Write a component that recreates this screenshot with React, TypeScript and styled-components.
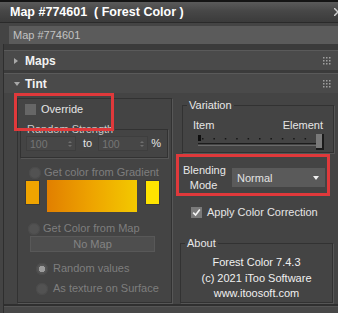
import React from 'react';
import styled, { createGlobalStyle } from 'styled-components';

const GlobalStyle = createGlobalStyle`
  html, body {
    margin: 0;
    padding: 0;
    background: #444444;
  }
  body {
    font-family: "Liberation Sans", Arial, sans-serif;
    font-size: 11px;
  }
`;

const Window = styled.div`
  width: 338px;
  height: 313px;
  overflow: hidden;
  background: #444444;
  display: flex;
  flex-direction: column;
  color: #e8e8e8;
`;

const TitleBar = styled.div`
  height: 20px;
  border-top: 2px solid #141414;
  border-bottom: 1px solid #2a2a2a;
  background: linear-gradient(#5a5a5a, #474747 45%, #3b3b3b);
  display: flex;
  align-items: center;
  padding-left: 10px;
  font-size: 12.5px;
  font-weight: bold;
  color: #ffffff;
  white-space: pre;
`;

const NameField = styled.div`
  margin: 3px 0 0 9px;
  height: 18px;
  line-height: 18px;
  padding-left: 4px;
  background: #5b5b5b;
  color: #c2c2c2;
`;

const RolloutArea = styled.div`
  flex: 1;
  display: flex;
  flex-direction: column;
  gap: 3px;
  padding-top: 6px;
  margin-left: 3px;
  background: #3b3b3b;
  border-left: 1px solid #2e2e2e;
`;

const RolloutHeader = styled.div`
  height: 19px;
  border-top: 1px solid #5a5a5a;
  background: #4a4a4a;
  display: flex;
  align-items: center;
  padding: 0 7px 0 10px;
  font-size: 12px;
  font-weight: bold;
  color: #f2f2f2;
`;

const Arrow = styled.span<{ $open?: boolean }>`
  width: 0;
  height: 0;
  margin-right: ${(p) => (p.$open ? '5px' : '7px')};
  border-style: solid;
  border-color: transparent;
  ${(p) =>
    p.$open
      ? 'border-width: 4px 3.5px 0 3.5px; border-top-color: #a8a8a8;'
      : 'border-width: 3.5px 0 3.5px 4px; border-left-color: #a8a8a8;'}
`;

const GripDots = () => (
  <svg width="8" height="8" style={{ marginLeft: 'auto' }}>
    {[0, 3, 6].map((x) =>
      [0, 3, 6].map((y) => <rect key={`${x}-${y}`} x={x} y={y} width="1.5" height="1.5" fill="#a0a0a0" />)
    )}
  </svg>
);

const TitleChevron = () => (
  <svg width="4" height="8" style={{ marginLeft: 'auto' }}>
    <path d="M0 0 L4 4 L0 8" stroke="#d0d0d0" strokeWidth="1.5" fill="none" />
  </svg>
);

const TintBody = styled.div`
  height: 213px;
  box-sizing: border-box;
  background: #444444;
  border-bottom: 2px solid #2f2f2f;
  display: flex;
  align-items: flex-start;
  padding-left: 13px;
`;

const LeftBox = styled.div`
  position: relative;
  margin-top: 5px;
  width: 155px;
  height: 205px;
  box-sizing: border-box;
  border: 1px solid #323232;
  box-shadow: 1px 1px 0 #575757;
  display: flex;
  flex-direction: column;
`;

const Highlight = styled.div<{ $l: number; $t: number; $w: number; $h: number }>`
  position: absolute;
  left: ${(p) => p.$l}px;
  top: ${(p) => p.$t}px;
  width: ${(p) => p.$w}px;
  height: ${(p) => p.$h}px;
  box-sizing: border-box;
  border: 3px solid #e0393b;
  pointer-events: none;
`;

const Row = styled.div<{ $mt?: number; $pl?: number; $gap?: number }>`
  display: flex;
  align-items: center;
  margin-top: ${(p) => p.$mt ?? 0}px;
  padding-left: ${(p) => p.$pl ?? 0}px;
  gap: ${(p) => p.$gap ?? 3}px;
`;

const CheckBox = styled.span<{ $bg?: string }>`
  width: 11px;
  height: 11px;
  flex: none;
  background: ${(p) => p.$bg ?? '#666666'};
  display: flex;
  align-items: center;
  justify-content: center;
`;

const Radio = styled.span<{ $dot?: boolean }>`
  width: 12px;
  height: 12px;
  flex: none;
  border-radius: 50%;
  background: ${(p) =>
    p.$dot ? 'radial-gradient(circle, #9c9c9c 0 3px, #555555 3.5px)' : '#525252'};
  box-shadow: inset 0 0 0 1px #4b4b4b;
`;

const Text = styled.span<{ $dim?: boolean }>`
  color: ${(p) => (p.$dim ? '#7e7e7e' : '#e6e6e6')};
  white-space: nowrap;
  line-height: 13px;
`;

const Group = styled.fieldset<{ $ml?: number; $mr?: number; $mt?: number; $h: number }>`
  margin: ${(p) => p.$mt ?? 0}px ${(p) => p.$mr ?? 0}px 0 ${(p) => p.$ml ?? 0}px;
  padding: 0;
  min-inline-size: 0;
  height: ${(p) => p.$h}px;
  box-sizing: border-box;
  border: 1px solid #323232;
  box-shadow: 1px 1px 0 #565656;
  display: flex;
  flex-direction: column;
`;

const Legend = styled.legend<{ $ml?: number; $dim?: boolean }>`
  margin-left: ${(p) => p.$ml ?? 4}px;
  padding: 0 2px;
  line-height: 13px;
  color: ${(p) => (p.$dim ? '#c9c9c9' : '#e8e8e8')};
`;

const Spinner = styled.div`
  width: 50px;
  height: 15px;
  box-sizing: border-box;
  background: #474747;
  border: 1px solid #3e3e3e;
  display: flex;
  align-items: center;
  padding-left: 3px;
  color: #767676;
  font-size: 10.5px;
`;

const SpinArrows = styled.span`
  margin-left: auto;
  margin-right: 3px;
  display: flex;
  flex-direction: column;
  gap: 2px;
  &::before,
  &::after {
    content: '';
    border-style: solid;
    border-color: transparent;
  }
  &::before {
    border-width: 0 2px 2px 2px;
    border-bottom-color: #6e6e6e;
  }
  &::after {
    border-width: 2px 2px 0 2px;
    border-top-color: #6e6e6e;
  }
`;

const Swatch = styled.div<{ $color: string }>`
  width: 15px;
  height: 25px;
  box-sizing: border-box;
  background: ${(p) => p.$color};
  border: 1px solid #3a3a3a;
`;

const GradientBar = styled.div`
  width: 90px;
  height: 32px;
  background: linear-gradient(90deg, #e17f00, #eea400 50%, #f3c900);
`;

const Button = styled.div`
  margin: 1px 0 0 12px;
  width: 125px;
  height: 16px;
  box-sizing: border-box;
  background: #4e4e4e;
  border: 1px solid #585858;
  color: #848484;
  display: flex;
  align-items: center;
  justify-content: center;
`;

const RightCol = styled.div`
  flex: 1;
  display: flex;
  flex-direction: column;
  margin-left: 4px;
`;

const SliderLabels = styled.div`
  display: flex;
  justify-content: space-between;
  padding: 7px 10px 0 10px;
  line-height: 13px;
`;

const BlendRow = styled.div`
  position: relative;
  margin-top: 3px;
  height: 43px;
  display: flex;
  align-items: center;
  padding-left: 7px;
`;

const BlendLabel = styled.div`
  width: 41px;
  text-align: center;
  line-height: 15px;
  color: #e8e8e8;
`;

const Dropdown = styled.div`
  margin-left: 8px;
  width: 93px;
  height: 19px;
  box-sizing: border-box;
  background: #5a5a5a;
  display: flex;
  align-items: center;
  padding: 0 6px 0 5px;
  color: #e2e2e2;
`;

const DropArrow = styled.span`
  margin-left: auto;
  border-style: solid;
  border-color: transparent;
  border-width: 4px 3.5px 0 3.5px;
  border-top-color: #f0f0f0;
`;

const AboutLines = styled.div`
  display: flex;
  flex-direction: column;
  align-items: center;
  padding-top: 5px;
  line-height: 15.5px;
  color: #f0f0f0;
`;

const NextRollout = styled.div`
  height: 6px;
  background: #484848;
  border-top: 1px solid #555555;
`;

const Slider = () => {
  const ticks = [];
  for (let i = 0; i < 11; i++) ticks.push(10 + i * 11.4);
  return (
    <svg width="136" height="20" style={{ marginLeft: 9, marginTop: 0 }}>
      {ticks.map((x) => (
        <rect key={x} x={x} y={6} width="1.5" height="1.5" fill="#151515" />
      ))}
      <rect x={6} y={11} width={124} height={1} fill="#1c1c1c" />
      <rect x={6} y={13} width={124} height={1} fill="#6a6a6a" />
      <rect x={6} y={3} width={3} height={6} fill="#0e0e0e" />
      <rect x={124} y={2} width={8} height={16} fill="#7a7a7a" />
      <rect x={130} y={2} width={2} height={16} fill="#1a1a1a" />
      <rect x={124} y={16} width={8} height={2} fill="#1a1a1a" />
    </svg>
  );
};

const Check = () => (
  <svg width="9" height="9" viewBox="0 0 9 9">
    <path d="M1.2 4.6 L3.6 7 L7.8 1.6" stroke="#f4f4f4" strokeWidth="1.6" fill="none" />
  </svg>
);

export default function App() {
  return (
    <>
      <GlobalStyle />
      <Window>
        <TitleBar>
          {'Map #774601  ( Forest Color )'}
          <TitleChevron />
        </TitleBar>
        <NameField>Map #774601</NameField>
        <RolloutArea>
          <RolloutHeader>
            <Arrow />
            Maps
            <GripDots />
          </RolloutHeader>
          <div>
            <RolloutHeader>
              <Arrow $open />
              Tint
              <GripDots />
            </RolloutHeader>
            <TintBody>
              <LeftBox>
                <Highlight $l={-4} $t={-6} $w={100} $h={38} />
                <Row $mt={4} $pl={7} $gap={5}>
                  <CheckBox />
                  <Text>Override</Text>
                </Row>
                <Group $ml={2} $mr={3} $mt={7} $h={35}>
                  <Legend $ml={4} $dim>
                    Random Strength
                  </Legend>
                  <Row $mt={0} $pl={5} $gap={0}>
                    <Spinner>
                      100
                      <SpinArrows />
                    </Spinner>
                    <Text style={{ margin: '0 6px 0 7px' }}>to</Text>
                    <Spinner>
                      100
                      <SpinArrows />
                    </Spinner>
                    <Text style={{ marginLeft: 3 }}>%</Text>
                  </Row>
                </Group>
                <Row $mt={8} $pl={11}>
                  <Radio />
                  <Text $dim>Get color from Gradient</Text>
                </Row>
                <Row $mt={1} $pl={7} $gap={7}>
                  <Swatch $color="#f0a400" style={{ alignSelf: 'flex-start' }} />
                  <GradientBar />
                  <Swatch $color="#ffe400" style={{ alignSelf: 'flex-start', marginLeft: 1 }} />
                </Row>
                <Row $mt={10} $pl={10}>
                  <Radio />
                  <Text $dim>Get Color from Map</Text>
                </Row>
                <Button>No Map</Button>
                <Row $mt={10} $pl={18} $gap={5}>
                  <Radio $dot />
                  <Text $dim>Random values</Text>
                </Row>
                <Row $mt={7} $pl={18} $gap={5}>
                  <Radio />
                  <Text $dim>As texture on Surface</Text>
                </Row>
              </LeftBox>
              <RightCol>
                <Group $ml={6} $mr={4} $mt={6} $h={54}>
                  <Legend $ml={4}>Variation</Legend>
                  <SliderLabels>
                    <Text>Item</Text>
                    <Text>Element</Text>
                  </SliderLabels>
                  <Slider />
                </Group>
                <BlendRow>
                  <Highlight $l={0} $t={-2} $w={154} $h={42} />
                  <BlendLabel>
                    Blending
                    <br />
                    Mode
                  </BlendLabel>
                  <Dropdown>
                    Normal
                    <DropArrow />
                  </Dropdown>
                </BlendRow>
                <Row $mt={7} $pl={15} $gap={5}>
                  <CheckBox $bg="#7a7a7a">
                    <Check />
                  </CheckBox>
                  <Text>Apply Color Correction</Text>
                </Row>
                <Group $ml={4} $mr={5} $mt={18} $h={66}>
                  <Legend $ml={4}>About</Legend>
                  <AboutLines>
                    <span>Forest Color 7.4.3</span>
                    <span>(c) 2021 iToo Software</span>
                    <span>www.itoosoft.com</span>
                  </AboutLines>
                </Group>
              </RightCol>
            </TintBody>
            <NextRollout />
          </div>
        </RolloutArea>
      </Window>
    </>
  );
}
